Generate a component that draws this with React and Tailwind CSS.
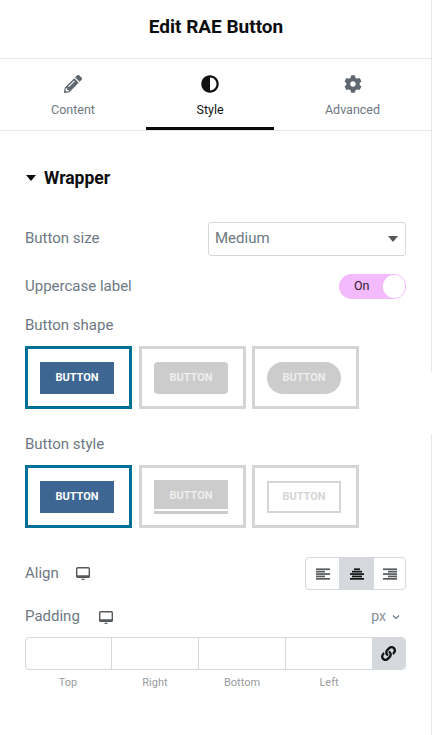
import React from "react";
import { FaPencilAlt, FaCog, FaAdjust, FaLink } from "react-icons/fa";

function Caret({ color }) {
  return (
    <svg width="10" height="6" viewBox="0 0 10 6"><path d="M0 0h10L5 6z" fill={color} /></svg>
  );
}

function Desktop() {
  return (
    <svg width="14" height="13" viewBox="0 0 14 13">
      <path d="M1.600.7h10.800a.9.900 0 0 1 .9.9v7.800a.9.900 0 0 1-.9.900H1.600a.9.900 0 0 1-.9-.9V1.600a.9.900 0 0 1 .9-.9z" fill="none" stroke="#55595c" strokeWidth="1.400" />
      <path d="M.7 8.200h12.600v1.400a.9.900 0 0 1-.9.900H1.600a.9.900 0 0 1-.9-.9z" fill="#55595c" />
      <rect x="5.500" y="11.700" width="3" height="1.200" fill="#55595c" />
    </svg>
  );
}

function AlignIcon({ rows, color }) {
  return (
    <svg width="14" height="12" viewBox="0 0 14 12">
      {rows.map((r, i) => (
        <rect key={i} x={r[0]} y={i * 2.4 + 0.4} width={r[1]} height="1.700" fill={color} />
      ))}
    </svg>
  );
}

function Choice({ active, children }) {
  return (
    <div className={`w-[107px] h-[63px] border-[3px] flex items-center justify-start pl-[12px] ${active ? "border-[#007194]" : "border-[#d5d5d5]"}`}>
      {children}
    </div>
  );
}

function Demo({ className, textClass = "text-white" }) {
  return (
    <div className={`w-[74px] h-[32px] flex items-center justify-center pt-[1px] text-[11px] font-bold ${textClass} ${className}`}>
      BUTTON
    </div>
  );
}

function Tab({ icon, label, active, className }) {
  return (
    <div className={`relative h-full flex flex-col items-center pt-[15px] ${active ? "text-[#111]" : "text-[#6d7882]"} ${className}`}>
      <div className={`h-[20px] flex items-center text-[18px] ${active ? "text-[#111]" : "text-[#5f6770]"}`}>{icon}</div>
      <div className="mt-[8px] text-[12.500px] leading-[16px]">{label}</div>
      {active && <div className="absolute left-0 right-0 bottom-0 h-[3px] bg-[#0a0a0a]" />}
    </div>
  );
}

function SubLabel({ children }) {
  return <div className="w-[87px] pr-[1px] text-center text-[11px] leading-[14px] text-[#9a9da1]">{children}</div>;
}

export default function App() {
  return (
    <div className="relative w-[432px] h-[735px] bg-white overflow-hidden font-['Roboto',sans-serif] text-[#6d7882]">
      <div className="h-[59px] border-b border-[#e6e8ea] flex items-center justify-center text-[19px] font-bold text-[#0c0d0e] pb-[3px]">
        Edit RAE Button
      </div>
      <div className="h-[72px] border-b border-[#e6e8ea] flex w-[431px]">
        <Tab className="w-[146px]" icon={<FaPencilAlt />} label="Content" />
        <Tab className="w-[128px]" icon={<FaAdjust />} label="Style" active />
        <Tab className="w-[157px]" icon={<FaCog />} label="Advanced" />
      </div>

      <div className="px-[25px] w-[431px]">
        <div className="mt-[36px] flex items-center h-[22px] text-[#0c0d0e] font-bold text-[17.500px]">
          <span className="ml-[1px] mr-[8px]"><Caret color="#0c0d0e" /></span>
          Wrapper
        </div>

        <div className="mt-[33px] flex items-center justify-between h-[34px] text-[15px]">
          <span className="pb-[2px]">Button size</span>
          <div className="w-[198px] h-[34px] border border-[#d5d8dc] rounded-[3px] flex items-center justify-between pl-[6px] pr-[7px]">
            <span className="pb-[2px]">Medium</span>
            <Caret color="#55595c" />
          </div>
        </div>

        <div className="mt-[18px] flex items-center justify-between h-[25px] text-[15px]">
          <span>Uppercase label</span>
          <div className="w-[67px] h-[25px] rounded-full bg-[#f3bafd] flex items-center justify-between pl-[15px] pr-[1px] text-[12.500px] text-[#2a1a33]">
            <span>On</span>
            <div className="w-[22px] h-[23px] rounded-full bg-white" />
          </div>
        </div>

        <div className="mt-[17px] h-[18px] leading-[18px] text-[15px]">Button shape</div>
        <div className="mt-[12px] flex">
          <Choice active><Demo className="bg-[#3d6693]" /></Choice>
          <div className="ml-[7px]"><Choice><Demo className="bg-[#cccccc] rounded-[4px]" textClass="text-[#eeeeee]" /></Choice></div>
          <div className="ml-[6px]"><Choice><Demo className="bg-[#cccccc] rounded-full" textClass="text-[#eeeeee]" /></Choice></div>
        </div>

        <div className="mt-[26px] h-[18px] leading-[18px] text-[15px]">Button style</div>
        <div className="mt-[12px] flex">
          <Choice active><Demo className="bg-[#3d6693]" /></Choice>
          <div className="ml-[7px]">
            <Choice>
              <div className="w-[74px] h-[34px] mt-[1px] flex flex-col">
                <div className="h-[29px] bg-[#cccccc] flex items-center justify-center text-[11px] font-bold text-[#eeeeee] pt-[3px]">BUTTON</div>
                <div className="h-[2px]" />
                <div className="h-[3px] bg-[#cccccc]" />
              </div>
            </Choice>
          </div>
          <div className="ml-[6px]"><Choice><Demo className="border-[2px] border-[#d5d5d5]" textClass="text-[#d5d5d5]" /></Choice></div>
        </div>

        <div className="mt-[29px] flex items-center justify-between h-[33px] text-[15px]">
          <div className="flex items-center gap-[17px]">
            <span>Align</span>
            <Desktop />
          </div>
          <div className="w-[101px] h-[33px] border border-[#d5d8dc] rounded-[4px] overflow-hidden flex">
            <div className="w-[33px] flex items-center justify-center">
              <AlignIcon color="#55595c" rows={[[0, 14], [0, 9], [0, 14], [0, 9], [0, 14]]} />
            </div>
            <div className="w-[35px] bg-[#d5d8dc] flex items-center justify-center">
              <AlignIcon color="#111" rows={[[4, 6], [2, 10], [0, 14], [2, 10], [0, 14]]} />
            </div>
            <div className="flex-1 flex items-center justify-center">
              <AlignIcon color="#55595c" rows={[[0, 14], [5, 9], [0, 14], [5, 9], [0, 14]]} />
            </div>
          </div>
        </div>

        <div className="mt-[16px] flex items-center justify-between h-[22px] text-[15px]">
          <div className="flex items-center gap-[19px]">
            <span className="pb-[2px]">Padding</span>
            <Desktop />
          </div>
          <div className="flex items-center gap-[6px] pr-[6px] text-[14px] text-[#8a9098]">
            <span className="pb-[2px]">px</span>
            <svg width="8" height="6" viewBox="0 0 8 6"><path d="M1 1.500l3 3 3-3" fill="none" stroke="#6d7882" strokeWidth="1.200" /></svg>
          </div>
        </div>

        <div className="mt-[9px] h-[33px] w-[381px] border border-[#d5d8dc] rounded-[4px] overflow-hidden flex">
          <div className="w-[86px] border-r border-[#d5d8dc]" />
          <div className="w-[87px] border-r border-[#d5d8dc]" />
          <div className="w-[87px] border-r border-[#d5d8dc]" />
          <div className="w-[86px]" />
          <div className="flex-1 bg-[#d5d8dc] flex items-center justify-center text-[#111] text-[15px]"><FaLink /></div>
        </div>
        <div className="mt-[6px] flex">
          <SubLabel>Top</SubLabel>
          <SubLabel>Right</SubLabel>
          <SubLabel>Bottom</SubLabel>
          <SubLabel>Left</SubLabel>
        </div>
      </div>

      <div className="absolute right-0 top-0 h-[372px] w-px bg-[#e6e8ea]" />
      <div className="absolute right-0 top-[434px] bottom-0 w-px bg-[#e6e8ea]" />
    </div>
  );
}
